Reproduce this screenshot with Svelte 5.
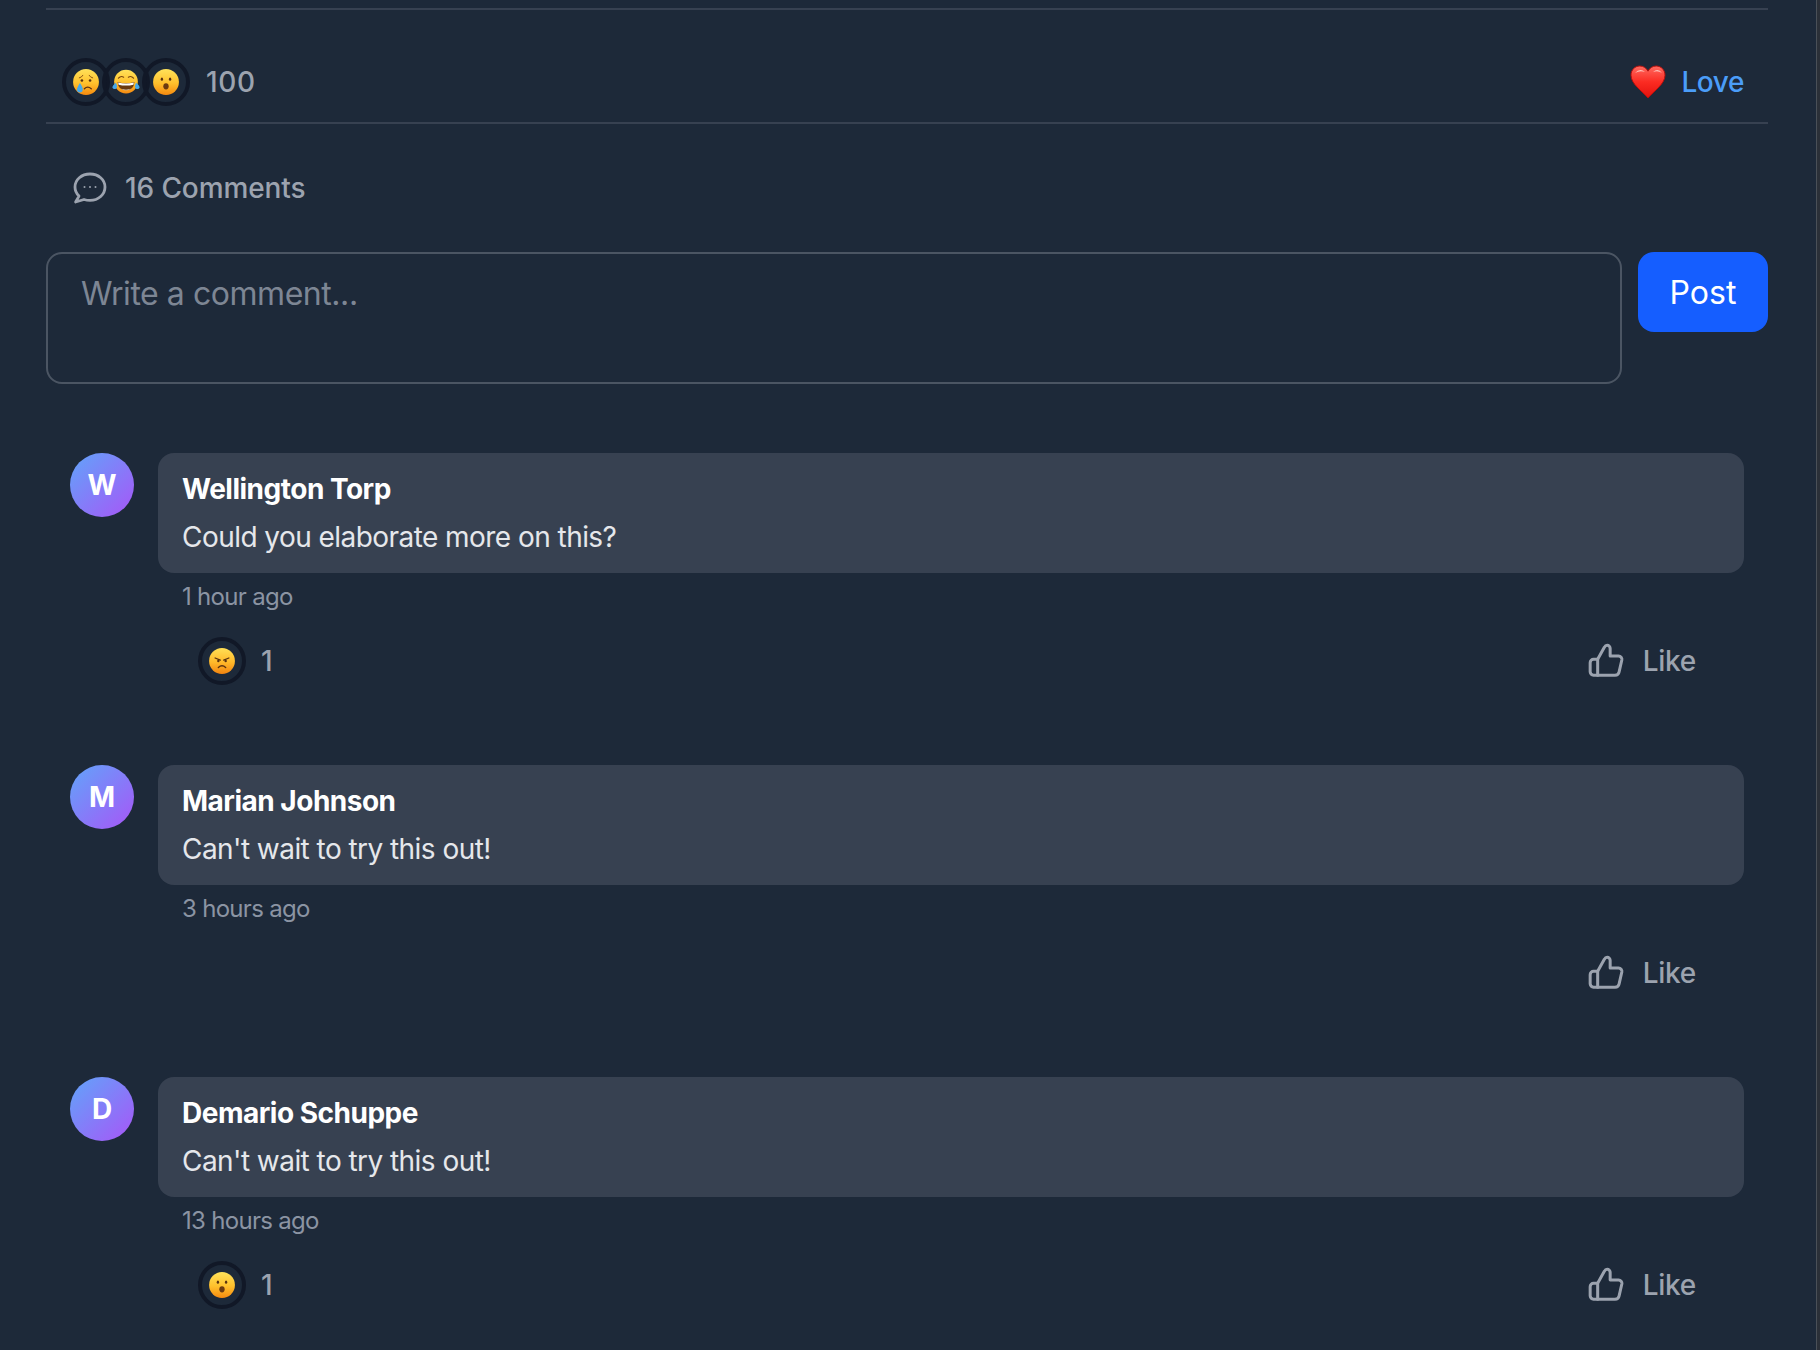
<script>
  const comments = [
    { initial: 'W', name: 'Wellington Torp', text: 'Could you elaborate more on this?', time: '1 hour ago', reaction: 'angry', count: 1 },
    { initial: 'M', name: 'Marian Johnson', text: "Can't wait to try this out!", time: '3 hours ago', reaction: null, count: 0 },
    { initial: 'D', name: 'Demario Schuppe', text: "Can't wait to try this out!", time: '13 hours ago', reaction: 'wow', count: 1 }
  ];
</script>

{#snippet emoji(kind)}
  <span class="ring">
    <svg class="face" viewBox="0 0 26 26" aria-hidden="true">
      {#if kind === 'laugh'}
        <circle cx="13" cy="12.600" r="11" fill="url(#skin)" />
        <path d="M6 9.500q2.200-2.600 4.800-1M15.200 8.500q2.600-1.600 4.800 1" fill="none" stroke="#7a4510" stroke-width="1.100" stroke-linecap="round" />
        <path d="M5.200 13q7.800 2.200 15.600 0q-.6 7.600-7.800 7.600t-7.800-7.600z" fill="#6b3a10" />
        <path d="M5.700 13.500q7.300 2 14.600 0l-.4 2q-6.900 1.700-13.800 0z" fill="#fff" />
        <path d="M8.400 19.200q4.600 2 9.200 0q-2 1.400-4.600 1.400t-4.600-1.400z" fill="#fff" />
        <path d="M3.600 13.600q2 3.800.2 5.600q-2.400 1.100-3.400-.8q-.3-2 3.200-4.800zM22.400 13.600q-2 3.800-.2 5.600q2.400 1.100 3.400-.8q.3-2-3.200-4.800z" fill="#45a8ea" />
      {:else if kind === 'cry'}
        <circle cx="13" cy="13" r="12" fill="url(#skin)" />
        <path d="M6.800 9.200q2.200-.4 3.300-2.400M19.200 9.200q-2.200-.4-3.300-2.400" fill="none" stroke="#8a5414" stroke-width=".9" stroke-linecap="round" />
        <circle cx="9.200" cy="11.600" r="1.200" fill="#5a3210" />
        <circle cx="16.800" cy="11.600" r="1.200" fill="#5a3210" />
        <path d="M11.500 19.300q3-3 6.400 0" fill="none" stroke="#5a3210" stroke-width="1.200" stroke-linecap="round" />
        <path d="M7.400 14q2.800 4.200 2.600 6a2.700 2.700 0 0 1-5.400 0q0-1.800 2.800-6z" fill="#45a8ea" />
      {:else if kind === 'wow'}
        <circle cx="13" cy="13" r="12" fill="url(#skin)" />
        <ellipse cx="9.200" cy="10.400" rx="1.100" ry="1.500" fill="#5a3210" />
        <ellipse cx="16.800" cy="10.400" rx="1.100" ry="1.500" fill="#5a3210" />
        <ellipse cx="13" cy="17" rx="2.500" ry="2.900" fill="#6b3a10" />
      {:else if kind === 'angry'}
        <circle cx="13" cy="13" r="12" fill="url(#angry)" />
        <path d="M6.600 10.200l4.800 2M19.400 10.200l-4.800 2" fill="none" stroke="#5a3210" stroke-width="1.200" stroke-linecap="round" />
        <circle cx="9.600" cy="13" r="1.100" fill="#5a3210" />
        <circle cx="16.400" cy="13" r="1.100" fill="#5a3210" />
        <path d="M9.600 19q3.400-3 6.800 0" fill="none" stroke="#5a3210" stroke-width="1.300" stroke-linecap="round" />
      {/if}
    </svg>
  </span>
{/snippet}

{#snippet thumb()}
  <svg class="like-icon" viewBox="0 0 24 24" fill="none" stroke="currentColor" stroke-width="1.800" stroke-linecap="round" stroke-linejoin="round" aria-hidden="true">
    <path d="M7 11v9.500M7 11l4-7.200c.4-.8 1-1.300 1.700-1.300 1 0 1.800.9 1.800 2V9h5a2 2 0 0 1 2 2.400l-1.600 7a2.600 2.600 0 0 1-2.500 2.100H7" />
    <path d="M7 11H4.500a2 2 0 0 0-2 2v5.500a2 2 0 0 0 2 2H7" />
  </svg>
{/snippet}

<svg class="defs" width="0" height="0" aria-hidden="true">
  <defs>
    <linearGradient id="skin" x1="0" y1="0" x2="0" y2="1">
      <stop offset="0" stop-color="#ffe25a" />
      <stop offset="0.55" stop-color="#ffc02c" />
      <stop offset="1" stop-color="#f58a10" />
    </linearGradient>
    <linearGradient id="angry" x1="0" y1="0" x2="0" y2="1">
      <stop offset="0" stop-color="#ffdf55" />
      <stop offset="0.55" stop-color="#ffb92a" />
      <stop offset="1" stop-color="#f28410" />
    </linearGradient>
    <linearGradient id="heart" x1="0" y1="0" x2="0" y2="1">
      <stop offset="0" stop-color="#ff6a60" />
      <stop offset="0.5" stop-color="#fb2b22" />
      <stop offset="1" stop-color="#e3120d" />
    </linearGradient>
  </defs>
</svg>

<main class="page">
  <section class="summary">
    <div class="reactions">
      <div class="stack">
        {@render emoji('cry')}
        {@render emoji('laugh')}
        {@render emoji('wow')}
      </div>
      <span class="count">100</span>
    </div>
    <div class="love">
      <svg class="heart" viewBox="0 0 36 34" aria-hidden="true">
        <path d="M18 33C12 26 1 19 1 10.200C1 4.800 5 1 9.800 1C13.400 1 16.400 3 18 6.200C19.600 3 22.600 1 26.200 1C31 1 35 4.800 35 10.200C35 19 24 26 18 33Z" fill="url(#heart)" stroke="#b80f0b" stroke-width="1" />
        <path d="M5 8Q10 2.500 15 7Q10 5 5 8ZM23 7Q28 2.500 32 8Q28 5 23 7Z" fill="#ffc4bc" />
      </svg>
      <span>Love</span>
    </div>
  </section>

  <div class="comment-count">
    <svg class="bubble-icon" viewBox="0 0 34 32" fill="none" stroke="currentColor" stroke-width="2.800" stroke-linejoin="round" aria-hidden="true">
      <path d="M17 2C8.500 2 2 7.700 2 15c0 3.600 1.600 6.800 4 9.100L2.600 30 11 27.500c1.900.6 3.900.9 6 .9 8.500 0 15-5.900 15-13.400S25.500 2 17 2Z" />
      <circle cx="11.500" cy="15" r="1" fill="currentColor" stroke="none" />
      <circle cx="17" cy="15" r="1" fill="currentColor" stroke="none" />
      <circle cx="22.500" cy="15" r="1" fill="currentColor" stroke="none" />
    </svg>
    <span>16 Comments</span>
  </div>

  <form class="composer" onsubmit={(e) => e.preventDefault()}>
    <textarea placeholder="Write a comment..."></textarea>
    <button type="submit">Post</button>
  </form>

  <ul class="comments">
    {#each comments as c}
      <li class="comment">
        <div class="avatar">{c.initial}</div>
        <div class="content">
          <div class="bubble">
            <div class="name">{c.name}</div>
            <div class="text">{c.text}</div>
          </div>
          <div class="time">{c.time}</div>
          <div class="actions">
            <div class="comment-reaction">
              {#if c.reaction}
                {@render emoji(c.reaction)}
                <span class="num">{c.count}</span>
              {/if}
            </div>
            <div class="like">
              {@render thumb()}
              <span>Like</span>
            </div>
          </div>
        </div>
      </li>
    {/each}
  </ul>
</main>
<div class="scrollbar"></div>

<style>
  :global(body) {
    margin: 0;
    background: #1d2939;
    overflow: hidden;
  }
  .defs { position: absolute; }
  .page {
    box-sizing: border-box;
    width: 1820px;
    height: 1350px;
    padding: 8px 52px 0 46px;
    background: #1d2939;
    font-family: Inter, "Noto Sans", sans-serif;
    color: #9ca3af;
    overflow: hidden;
  }
  .summary {
    display: flex;
    justify-content: space-between;
    align-items: center;
    border-top: 2px solid #374151;
    border-bottom: 2px solid #374151;
    padding: 48px 24px 16px 16px;
  }
  .reactions, .love, .comment-count, .like, .comment-reaction {
    display: flex;
    align-items: center;
  }
  .stack { display: flex; }
  .stack > :global(.ring:not(:first-child)) { margin-left: -8px; }
  .ring {
    box-sizing: border-box;
    width: 48px;
    height: 48px;
    border: 4px solid #111827;
    border-radius: 50%;
    display: flex;
    align-items: center;
    justify-content: center;
    flex: none;
  }
  .face { width: 28px; height: 28px; display: block; }
  .count { font-size: 28px; font-weight: 500; margin-left: 16px; letter-spacing: 0.6px; }
  .love { color: #4b9df8; font-size: 28px; font-weight: 500; gap: 15px; letter-spacing: -0.4px; }
  .heart { width: 36px; height: 34px; }
  .comment-count {
    gap: 18px;
    height: 64px;
    margin-top: 32px;
    padding-left: 27px;
    font-size: 28px;
    font-weight: 500;
    letter-spacing: -0.1px;
  }
  .bubble-icon { width: 34px; height: 32px; }
  .composer {
    display: flex;
    gap: 16px;
    align-items: flex-start;
    margin-top: 32px;
  }
  textarea {
    box-sizing: border-box;
    flex: 1;
    height: 132px;
    background: transparent;
    border: 2px solid #4b5563;
    border-radius: 16px;
    padding: 16px 33px;
    font: 32px/48px Inter, "Noto Sans", sans-serif;
    letter-spacing: -0.45px;
    color: #fff;
    resize: none;
    outline: none;
  }
  textarea::placeholder { color: #7d8694; opacity: 1; }
  button {
    width: 130px;
    height: 80px;
    border: 0;
    border-radius: 16px;
    background: #155eff;
    color: #fff;
    font: 400 32px Inter, "Noto Sans", sans-serif;
    padding: 0;
  }
  .comments {
    list-style: none;
    margin: 69px 0 0;
    padding: 0 24px;
    display: flex;
    flex-direction: column;
  }
  .comment { display: flex; gap: 24px; height: 312px; }
  .avatar {
    width: 64px;
    height: 64px;
    border-radius: 50%;
    background: linear-gradient(135deg, #60a5fa, #a855f7);
    color: #fff;
    font-size: 28px;
    font-weight: 700;
    display: flex;
    align-items: center;
    justify-content: center;
    flex: none;
  }
  .content { flex: 1; min-width: 0; }
  .bubble {
    box-sizing: border-box;
    height: 120px;
    background: #374151;
    border-radius: 16px;
    padding: 16px 24px 0;
  }
  .name { color: #fff; font-size: 28px; font-weight: 700; line-height: 40px; letter-spacing: -0.5px; }
  .text { color: #e5e7eb; font-size: 28px; line-height: 48px; margin-top: 4px; letter-spacing: -0.55px; }
  .time { font-size: 24px; line-height: 32px; margin: 8px 0 0 24px; letter-spacing: -0.7px; color: #8b94a3; }
  .actions {
    display: flex;
    justify-content: space-between;
    align-items: center;
    height: 48px;
    margin-top: 24px;
    padding: 0 48px 0 40px;
  }
  .comment-reaction { gap: 15px; }
  .num { font-size: 28px; font-weight: 500; }
  .like { gap: 17px; font-size: 28px; font-weight: 500; letter-spacing: -0.3px; }
  .like-icon { width: 40px; height: 40px; }
  .scrollbar {
    position: fixed;
    top: 0;
    right: 0;
    bottom: 0;
    width: 4px;
    box-sizing: border-box;
    border-left: 1px solid #4a5058;
    background: #2b3038;
  }
</style>
